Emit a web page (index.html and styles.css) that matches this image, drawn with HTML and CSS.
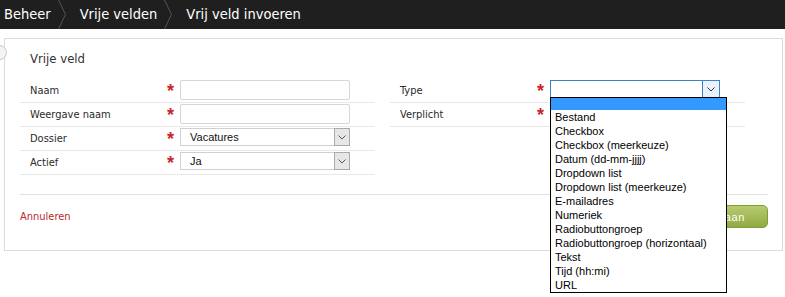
FILE: index.html
```html
<!DOCTYPE html>
<html lang="nl">
<head>
<meta charset="utf-8">
<title>Vrij veld invoeren</title>
<link rel="stylesheet" href="styles.css">
</head>
<body>
<nav class="crumbs">
  <span class="crumb">Beheer</span>
  <svg class="crumb-sep" viewBox="0 0 8 29" width="8" height="29"><polyline points="0.5,0 7.5,14.5 0.5,29" fill="none" stroke="#555" stroke-width="1"/></svg>
  <span class="crumb">Vrije velden</span>
  <svg class="crumb-sep" viewBox="0 0 8 29" width="8" height="29"><polyline points="0.5,0 7.5,14.5 0.5,29" fill="none" stroke="#555" stroke-width="1"/></svg>
  <span class="crumb">Vrij veld invoeren</span>
</nav>

<section class="panel">
  <span class="knob"></span>
  <h2 class="panel-title">Vrije veld</h2>
  <div class="form">
    <div class="col">
      <div class="row"><label class="lbl">Naam</label><span class="req">*</span><span class="input"></span></div>
      <div class="row"><label class="lbl">Weergave naam</label><span class="req">*</span><span class="input"></span></div>
      <div class="row"><label class="lbl">Dossier</label><span class="req">*</span>
        <span class="select"><span class="val">Vacatures</span><span class="arrow"><svg viewBox="0 0 8 5" width="8" height="5"><polyline points="0.5,0.5 4,4 7.5,0.5" fill="none" stroke="#555" stroke-width="1"/></svg></span></span></div>
      <div class="row"><label class="lbl">Actief</label><span class="req">*</span>
        <span class="select"><span class="val">Ja</span><span class="arrow"><svg viewBox="0 0 8 5" width="8" height="5"><polyline points="0.5,0.5 4,4 7.5,0.5" fill="none" stroke="#555" stroke-width="1"/></svg></span></span></div>
    </div>
    <div class="col">
      <div class="row"><label class="lbl">Type</label><span class="req">*</span>
        <span class="select focus"><span class="val"></span><span class="arrow"><svg viewBox="0 0 8 5" width="8" height="5"><polyline points="0.5,0.5 4,4 7.5,0.5" fill="none" stroke="#333" stroke-width="1"/></svg></span>
          <ul class="dropdown">
            <li class="sel"></li>
            <li>Bestand</li>
            <li>Checkbox</li>
            <li>Checkbox (meerkeuze)</li>
            <li>Datum (dd-mm-jjjj)</li>
            <li>Dropdown list</li>
            <li>Dropdown list (meerkeuze)</li>
            <li>E-mailadres</li>
            <li>Numeriek</li>
            <li>Radiobuttongroep</li>
            <li>Radiobuttongroep (horizontaal)</li>
            <li>Tekst</li>
            <li>Tijd (hh:mi)</li>
            <li>URL</li>
          </ul>
        </span></div>
      <div class="row"><label class="lbl">Verplicht</label><span class="req">*</span></div>
    </div>
  </div>
  <div class="footer">
    <a class="cancel" href="#">Annuleren</a>
    <button class="save" type="button">Opslaan</button>
  </div>
</section>
</body>
</html>
```
FILE: styles.css
```css
html, body {
  margin: 0;
  padding: 0;
}
body {
  background: #fff;
  font-family: "DejaVu Sans Condensed", "DejaVu Sans", sans-serif;
  font-stretch: condensed;
  color: #2a2a2a;
  height: 297px;
  overflow: hidden;
}

.crumbs {
  display: flex;
  align-items: stretch;
  height: 29px;
  background: #1f1f1f;
  padding-left: 4px;
  color: #fff;
  font-size: 14.5px;
  line-height: 29px;
}
.crumb {
  white-space: nowrap;
}
.crumb-sep {
  display: block;
  margin: 0 14px 0 7px;
}

.panel {
  position: relative;
  margin: 9px 2px 0 4px;
  border: 1px solid #dcdcdc;
  padding: 0 14px 0 15px;
}
.knob {
  position: absolute;
  left: -13px;
  top: 6px;
  width: 13px;
  height: 13px;
  border: 1px solid #c8c8c8;
  border-radius: 50%;
  background: #f3f3f3;
}
.panel-title {
  margin: 0;
  padding: 12px 0 12px 10px;
  font-size: 13px;
  line-height: 16px;
  font-weight: normal;
  color: #333;
}

.form {
  display: grid;
  grid-template-columns: 355px 355px;
  column-gap: 15px;
  align-items: start;
}
.row {
  display: grid;
  grid-template-columns: 148px 12px 170px;
  align-items: start;
  height: 23px;
  border-bottom: 1px solid #e8e8e8;
}
.lbl {
  padding-left: 10px;
  font-size: 11px;
  line-height: 23px;
  color: #2a2a2a;
}
.req {
  color: #c8252d;
  font-family: "Liberation Sans", Arial, sans-serif;
  font-weight: bold;
  font-size: 18px;
  line-height: 24px;
  margin-left: -1px;
}
.input {
  display: block;
  margin-top: 1px;
  height: 20px;
  box-sizing: border-box;
  border: 1px solid #d6d6d6;
  border-radius: 2px;
  background: #fff;
}
.select {
  position: relative;
  display: flex;
  justify-content: space-between;
  align-items: stretch;
  margin-top: 1px;
  height: 18px;
  box-sizing: border-box;
  border: 1px solid #d0d0d0;
  background: #fff;
  font-family: "Liberation Sans", Arial, sans-serif;
  font-size: 11px;
  line-height: 16px;
  color: #111;
}
.select .val {
  padding-left: 9px;
}
.select .arrow {
  display: flex;
  align-items: center;
  justify-content: center;
  width: 16px;
  margin: -1px -1px -1px 0;
  box-sizing: border-box;
  border: 1px solid #ababab;
  background: #e6e6e6;
}
.select.focus {
  border-color: #3a83c8;
}
.select.focus .arrow {
  border-color: #3a83c8;
  background: #e9f2fb;
  width: 18px;
}

.dropdown {
  position: absolute;
  left: -1px;
  top: 16px;
  z-index: 5;
  width: 177px;
  box-sizing: border-box;
  margin: 0;
  padding: 0;
  list-style: none;
  border: 1px solid #000;
  background: #fff;
  font-family: "Liberation Sans", Arial, sans-serif;
  font-size: 11px;
  line-height: 14px;
  color: #000;
}
.dropdown li {
  height: 14px;
  padding-left: 4px;
  white-space: nowrap;
}
.dropdown li.sel {
  height: 12px;
  background: #3399ff;
}

.footer {
  display: flex;
  justify-content: space-between;
  align-items: center;
  margin-top: 19px;
  border-top: 1px solid #e0e0e0;
  padding: 10px 0 22px;
}
.cancel {
  color: #b8282d;
  text-decoration: none;
  font-size: 11px;
  line-height: 14px;
}
.save {
  height: 23px;
  padding: 0 22px 0 22px;
  border: 1px solid #829d36;
  border-radius: 5px;
  background: linear-gradient(#b7cb70, #90aa44);
  color: #fff;
  font-family: "Liberation Sans", Arial, sans-serif;
  font-size: 11px;
  letter-spacing: 0.6px;
}
```
